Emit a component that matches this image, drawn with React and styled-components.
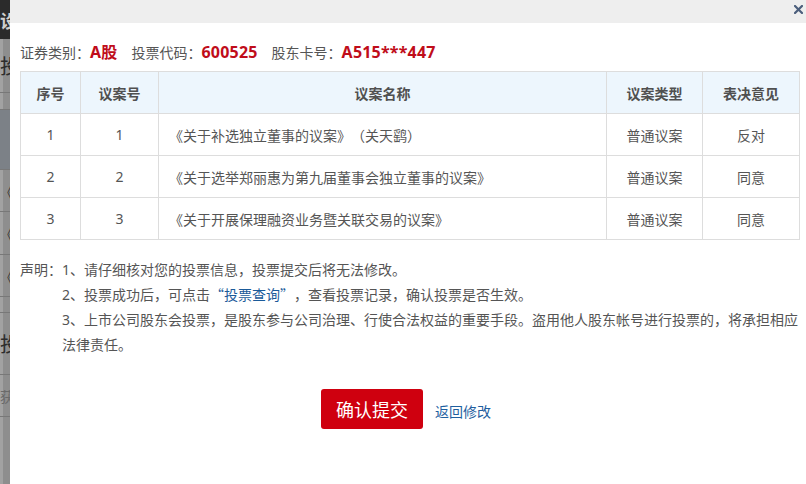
import React from "react";
import styled, { createGlobalStyle } from "styled-components";

const Global = createGlobalStyle`
  html, body { margin: 0; padding: 0; background: #ffffff; }
  body { font-family: "Noto Sans", "Noto Sans CJK SC", sans-serif; text-spacing-trim: space-all; }
  * { box-sizing: border-box; }
`;

const Page = styled.div`
  display: flex;
  width: 806px;
  height: 484px;
  overflow: hidden;
`;

/* dimmed page that lies behind the dialog, only a sliver shows */
const Backdrop = styled.div`
  width: 10px;
  flex: none;
  display: flex;
  flex-direction: column;
  overflow: hidden;
  background: #8e8e8e;
  box-shadow: inset 3px 0 0 #a2a2a2;
`;

const BackRow = styled.div`
  height: ${(p) => p.$h}px;
  flex: none;
  display: flex;
  align-items: center;
  white-space: nowrap;
  background: ${(p) => p.$bg || "transparent"};
  border-bottom: ${(p) => (p.$line ? "1px solid #787878" : "none")};
  color: ${(p) => p.$color || "#2c2c2c"};
  font-family: "Noto Sans CJK SC", sans-serif;
  font-size: ${(p) => p.$size || 14}px;
  font-weight: ${(p) => (p.$bold ? 700 : 400)};
  padding-left: ${(p) => p.$shift || 0}px;
`;

const Dialog = styled.div`
  flex: 1;
  display: flex;
  flex-direction: column;
  background: #ffffff;
  color: #555555;
  font-family: "Noto Sans", "Noto Sans CJK SC", sans-serif;
  font-size: 14px;
  text-spacing-trim: space-all;
`;

const TitleBar = styled.div`
  height: 23px;
  flex: none;
  background: #eeeeee;
  display: flex;
  justify-content: flex-end;
  align-items: center;
  padding-right: 4px;
`;

const CloseBtn = styled.button`
  width: 9px;
  height: 9px;
  padding: 0;
  margin: -4px 0 0 0;
  border: 0;
  background: none;
  display: flex;
  cursor: pointer;
`;

const Body = styled.div`
  padding: 0 7px 0 10px;
  display: flex;
  flex-direction: column;
`;

const InfoLine = styled.div`
  margin-top: 19px;
  height: 20px;
  line-height: 20px;
  display: flex;
  align-items: baseline;
  gap: 14px;
  white-space: nowrap;
`;

const InfoItem = styled.span`
  color: #555555;
  font-size: 14px;
`;

const Value = styled.b`
  color: #c00d1a;
  font-weight: 700;
  font-size: 16px;
  letter-spacing: 0.2px;
`;

const Table = styled.table`
  margin-top: 9px;
  width: 779px;
  table-layout: fixed;
  border-collapse: collapse;
  border: 1px solid #dddddd;
`;

const Th = styled.th`
  height: 42px;
  background: #edf6fd;
  border: 1px solid #dddddd;
  color: #505050;
  font-weight: 700;
  font-size: 14px;
  text-align: center;
  padding: 0;
`;

const Td = styled.td`
  height: 42px;
  border: 1px solid #dddddd;
  color: #555555;
  font-size: 14px;
  text-align: ${(p) => (p.$left ? "left" : "center")};
  padding: ${(p) => (p.$left ? "0 0 0 10px" : "0")};
  white-space: nowrap;
`;

const Notice = styled.div`
  margin-top: 17px;
  margin-right: -6px;
  display: flex;
  line-height: 25px;
  font-size: 14px;
  color: #555555;
`;

const NoticeLabel = styled.span`
  width: 42px;
  flex: none;
  white-space: nowrap;
`;

const NoticeList = styled.div`
  flex: 1;
  display: flex;
  flex-direction: column;
`;

const NoticeLink = styled.span`
  color: #1a5a99;
  font-family: "Noto Sans CJK SC", sans-serif;
`;

const Actions = styled.div`
  margin-top: 32px;
  display: flex;
  justify-content: center;
  align-items: baseline;
  gap: 12px;
  padding-right: 8px;
`;

const SubmitBtn = styled.button`
  width: 102px;
  height: 40px;
  border: 0;
  border-radius: 3px;
  background: #cf000f;
  color: #ffffff;
  font-family: "Noto Sans CJK SC", sans-serif;
  font-size: 18px;
  line-height: 40px;
  padding: 0;
  cursor: pointer;
`;

const BackLink = styled.a`
  color: #1f5f9f;
  font-size: 14px;
  text-decoration: none;
  cursor: pointer;
`;

const rows = [
  { no: 1, code: 1, name: "《关于补选独立董事的议案》（关天鹞）", type: "普通议案", vote: "反对" },
  { no: 2, code: 2, name: "《关于选举郑丽惠为第九届董事会独立董事的议案》", type: "普通议案", vote: "同意" },
  { no: 3, code: 3, name: "《关于开展保理融资业务暨关联交易的议案》", type: "普通议案", vote: "同意" },
];

export default function App() {
  return (
    <>
      <Global />
      <Page>
        <Backdrop>
          <BackRow $h={39} $bg="#2b2b2b" $color="#cfcfcf" $size={18} $bold $shift={-8}>设</BackRow>
          <BackRow $h={54} $line $size={20} $shift={-1}>投</BackRow>
          <BackRow $h={17} $line />
          <BackRow $h={60} $bg="#7c8187" $line />
          <BackRow $h={42} $line $color="#333" $shift={-9}>《关</BackRow>
          <BackRow $h={43} $line $color="#333" $shift={-9}>《关</BackRow>
          <BackRow $h={42} $line $color="#333" $shift={-9}>《关</BackRow>
          <BackRow $h={16} $line />
          <BackRow $h={62} $line $size={20} $shift={-1}>投</BackRow>
          <BackRow $h={42} $line $color="#6a6a6a" $shift={-7}>获</BackRow>
        </Backdrop>
        <Dialog>
          <TitleBar>
            <CloseBtn aria-label="关闭">
              <svg width="9" height="9" viewBox="0 0 9 9">
                <path d="M1 1 L8 8 M8 1 L1 8" stroke="#4b5e7c" strokeWidth="2.2" strokeLinecap="square" />
              </svg>
            </CloseBtn>
          </TitleBar>
          <Body>
            <InfoLine>
              <InfoItem>证券类别：<Value>A股</Value></InfoItem>
              <InfoItem>投票代码：<Value>600525</Value></InfoItem>
              <InfoItem>股东卡号：<Value>A515***447</Value></InfoItem>
            </InfoLine>
            <Table>
              <colgroup>
                <col style={{ width: 60 }} />
                <col style={{ width: 78 }} />
                <col style={{ width: 448 }} />
                <col style={{ width: 96 }} />
                <col style={{ width: 97 }} />
              </colgroup>
              <thead>
                <tr>
                  <Th>序号</Th>
                  <Th>议案号</Th>
                  <Th>议案名称</Th>
                  <Th>议案类型</Th>
                  <Th>表决意见</Th>
                </tr>
              </thead>
              <tbody>
                {rows.map((r) => (
                  <tr key={r.no}>
                    <Td>{r.no}</Td>
                    <Td>{r.code}</Td>
                    <Td $left>{r.name}</Td>
                    <Td>{r.type}</Td>
                    <Td>{r.vote}</Td>
                  </tr>
                ))}
              </tbody>
            </Table>
            <Notice>
              <NoticeLabel>声明：</NoticeLabel>
              <NoticeList>
                <div>1、请仔细核对您的投票信息，投票提交后将无法修改。</div>
                <div>2、投票成功后，可点击<NoticeLink>“投票查询”</NoticeLink>，查看投票记录，确认投票是否生效。</div>
                <div>3、上市公司股东会投票，是股东参与公司治理、行使合法权益的重要手段。盗用他人股东帐号进行投票的，将承担相应法律责任。</div>
              </NoticeList>
            </Notice>
            <Actions>
              <SubmitBtn>确认提交</SubmitBtn>
              <BackLink>返回修改</BackLink>
            </Actions>
          </Body>
        </Dialog>
      </Page>
    </>
  );
}
